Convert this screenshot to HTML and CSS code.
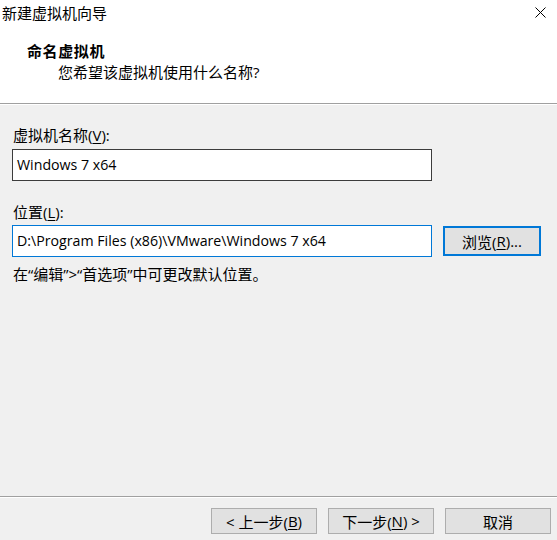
FILE: index.html
```html
<!DOCTYPE html>
<html lang="zh-CN">
<head>
<meta charset="utf-8">
<title>新建虚拟机向导</title>
<link rel="stylesheet" href="styles.css">
</head>
<body>
<div class="window">
  <header class="top">
    <div class="titlebar">
      <span class="title-text">新建虚拟机向导</span>
      <svg class="close" width="11" height="11" viewBox="0 0 11 11"><path d="M0.5 0.5 L10.5 10.5 M10.5 0.5 L0.5 10.5" stroke="#000" stroke-width="1" fill="none"/></svg>
    </div>
    <div class="heading">
      <div class="h-title">命名虚拟机</div>
      <div class="h-sub">您希望该虚拟机使用什么名称?</div>
    </div>
  </header>
  <main class="content">
    <div class="label first">虚拟机名称(<u>V</u>):</div>
    <div class="field name-field">Windows 7 x64</div>
    <div class="label second">位置(<u>L</u>):</div>
    <div class="row">
      <div class="field focus">D:\Program Files (x86)\VMware\Windows 7 x64</div>
      <div class="btn browse">浏览(<u>R</u>)...</div>
    </div>
    <div class="hint">在“编辑”&gt;“首选项”中可更改默认位置。</div>
  </main>
  <footer class="bottom">
    <div class="btn nav">&lt; 上一步(<u>B</u>)</div>
    <div class="btn nav">下一步(<u>N</u>) &gt;</div>
    <div class="btn nav">取消</div>
  </footer>
</div>
</body>
</html>
```
FILE: styles.css
```css
html, body {
  margin: 0;
  padding: 0;
}
body {
  background: #f0f0f0;
  font-family: "Open Sans", "Noto Sans CJK SC", sans-serif;
  font-size: 15px;
  color: #000;
}
.window {
  width: 557px;
  height: 540px;
  display: flex;
  flex-direction: column;
  overflow: hidden;
}
.top {
  height: 103px;
  background: #fff;
  border-bottom: 1px solid #a0a0a0;
  flex: none;
}
.titlebar {
  height: 30px;
  display: flex;
  justify-content: space-between;
  align-items: flex-start;
}
.title-text {
  padding-left: 2px;
  padding-top: 3px;
  line-height: 20px;
}
.close {
  margin-top: 7px;
  margin-right: 11px;
}
.heading {
  padding-top: 11px;
}
.h-title {
  padding-left: 27px;
  font-weight: bold;
  line-height: 20px;
  letter-spacing: 0.6px;
}
.h-sub {
  padding-left: 58px;
  margin-top: 1px;
  line-height: 20px;
}
.content {
  flex: 1;
  padding: 21px 0 0 12px;
  box-shadow: inset 0 1px 0 #fff;
}
.label {
  line-height: 20px;
  padding-left: 1px;
}
.label.second {
  margin-top: 21px;
}
.field {
  box-sizing: border-box;
  width: 420px;
  height: 32px;
  background: #fff;
  border: 1px solid #3c3c3c;
  padding: 0 4px;
  font-size: 14.2px;
  line-height: 30px;
  white-space: nowrap;
  overflow: hidden;
}
.name-field {
  margin-top: 4px;
}
.field.focus {
  border-color: #0078d7;
}
.row {
  margin-top: 3px;
  display: flex;
  align-items: center;
}
.btn {
  box-sizing: border-box;
  background: #e1e1e1;
  display: flex;
  align-items: center;
  justify-content: center;
  white-space: nowrap;
}
.browse {
  margin-left: 11px;
  width: 98px;
  height: 30px;
  border: 2px solid #0078d7;
}
.hint {
  margin-top: 7px;
  line-height: 20px;
  padding-left: 1px;
}
.bottom {
  flex: none;
  box-sizing: border-box;
  height: 44px;
  border-top: 1px solid #a0a0a0;
  box-shadow: inset 0 1px 0 #fff;
  display: flex;
  justify-content: flex-end;
  align-items: flex-start;
  gap: 11px;
  padding: 11px 6px 0 0;
}
.nav {
  width: 106px;
  height: 26px;
  border: 1px solid #adadad;
}
u {
  text-underline-offset: 2px;
}
```
